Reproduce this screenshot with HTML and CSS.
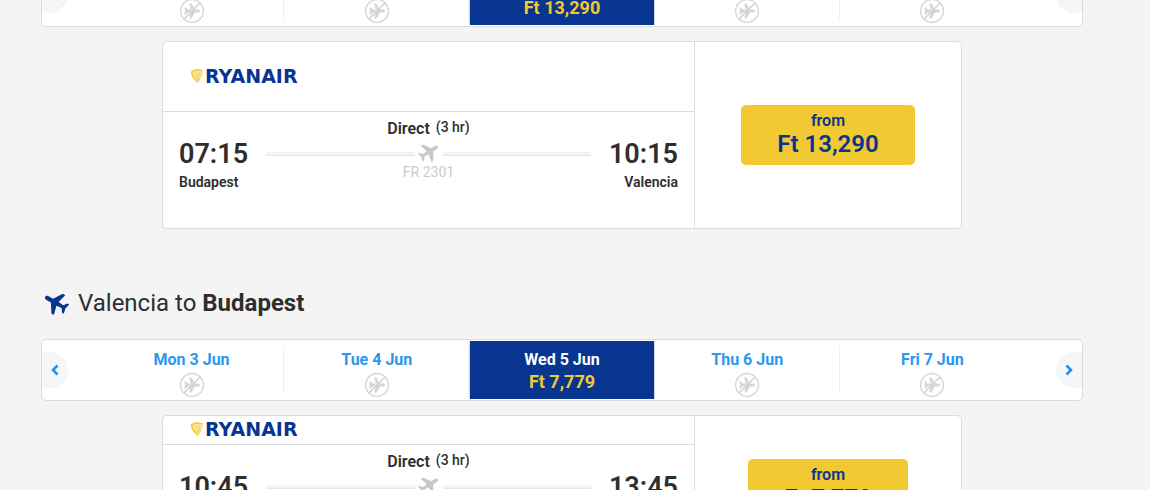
FILE: index.html
```html
<!DOCTYPE html>
<html lang="en">
<head>
  <meta charset="UTF-8" />
  <meta name="viewport" content="width=device-width, initial-scale=1.0"/>
  <title>Select flights</title>
  <link rel="stylesheet" href="styles.css">
</head>
<body>
  <!-- Shared icons -->
  <svg class="sprite" aria-hidden="true">
    <symbol id="plane" viewBox="0 0 24 24">
      <path d="M22.500 15.800v-2.600l-8.500-5.500V3c0-1.300-.8-2.600-2-2.600S10 1.700 10 3v4.700L1.500 13.200v2.600l8.500-2.200.5 5.200-3.500 2.600v1.800l5-1.200 5 1.200v-1.800l-3.500-2.600.5-5.200z"/>
    </symbol>
    <symbol id="no-flight" viewBox="0 0 26 26">
      <circle cx="13" cy="13" r="11.400" fill="none" stroke="#d3d8dc" stroke-width="1.500"/>
      <path fill="#d3d6d9" d="M21 13c0-1-.9-1.600-2-1.600h-3L12.400 5.500h-2.200l1.600 5.900-3.200.1-1.600-1.900H5.300l.8 3.400-.8 3.400H7l1.600-1.900 3.200.1-1.600 5.900h2.200l3.600-5.900h3c1.100 0 2-.6 2-1.600z"/>
      <path d="M4.400 20 20 4.400" stroke="#fff" stroke-width=".6"/>
      <path d="M5 21 21 5" stroke="#cbd0d5" stroke-width="1.400"/>
    </symbol>
    <symbol id="harp" viewBox="0 0 12 14">
      <path d="M.6 2.500C3 .3 8 .6 11.500 1.700 11.200 6 9.600 10 7.200 13.500 3.500 10.500.6 6.500.6 2.500z" fill="#fbe7a4"/>
      <path d="M7.200 13C3.500 10.500.6 6.500.8 2.800 3.500.5 8 .9 11.400 1.800" fill="none" stroke="#f1c933" stroke-width="1.600"/>
      <path d="M3.500 3.500 7 11M6 3l1.500 8M8.500 3l-.7 7M11 2C10.700 6 9.200 10 7.200 13" fill="none" stroke="#f3d257" stroke-width=".8"/>
    </symbol>
    <symbol id="left" viewBox="0 0 8 12"><path d="M6.500 1.500 2 6l4.500 4.500" fill="none" stroke="#2091eb" stroke-width="2.500"/></symbol>
    <symbol id="right" viewBox="0 0 8 12"><path d="M1.500 1.500 6 6l-4.500 4.500" fill="none" stroke="#2091eb" stroke-width="2.500"/></symbol>
  </svg>

  <main class="page">
    <!-- Outbound -->
    <div class="dates dates-cut">
      <button class="arrow prev" aria-label="Previous days"><svg><use href="#left"/></svg></button>
      <div class="days">
        <button class="day" aria-label="No flight"><svg class="none"><use href="#no-flight"/></svg></button>
        <button class="day" aria-label="No flight"><svg class="none"><use href="#no-flight"/></svg></button>
        <button class="day selected"><span class="fare">Ft 13,290</span></button>
        <button class="day" aria-label="No flight"><svg class="none"><use href="#no-flight"/></svg></button>
        <button class="day" aria-label="No flight"><svg class="none"><use href="#no-flight"/></svg></button>
      </div>
      <button class="arrow next" aria-label="Next days"><svg><use href="#right"/></svg></button>
    </div>

    <div class="card">
      <div class="flight">
        <div class="airline airline-tall">
          <svg class="harp"><use href="#harp"/></svg><span>RYANAIR</span>
        </div>
        <div class="leg">
          <div class="stop">
            <div class="time">07:15</div>
            <div class="city">Budapest</div>
          </div>
          <div class="route">
            <div class="direct">Direct <span class="duration">(3 hr)</span></div>
            <div class="line"><svg><use href="#plane"/></svg></div>
            <div class="number">FR 2301</div>
          </div>
          <div class="stop arrival">
            <div class="time">10:15</div>
            <div class="city">Valencia</div>
          </div>
        </div>
      </div>
      <div class="buy">
        <button class="price"><span class="from">from</span><span class="amount">Ft 13,290</span></button>
      </div>
    </div>

    <!-- Return -->
    <h2 class="title"><svg><use href="#plane"/></svg><span>Valencia to <b>Budapest</b></span></h2>

    <div class="dates">
      <button class="arrow prev" aria-label="Previous days"><svg><use href="#left"/></svg></button>
      <div class="days">
        <button class="day"><span class="date">Mon 3 Jun</span><svg class="none"><use href="#no-flight"/></svg></button>
        <button class="day"><span class="date">Tue 4 Jun</span><svg class="none"><use href="#no-flight"/></svg></button>
        <button class="day selected"><span class="date">Wed 5 Jun</span><span class="fare">Ft 7,779</span></button>
        <button class="day"><span class="date">Thu 6 Jun</span><svg class="none"><use href="#no-flight"/></svg></button>
        <button class="day"><span class="date">Fri 7 Jun</span><svg class="none"><use href="#no-flight"/></svg></button>
      </div>
      <button class="arrow next" aria-label="Next days"><svg><use href="#right"/></svg></button>
    </div>

    <div class="card">
      <div class="flight">
        <div class="airline">
          <svg class="harp"><use href="#harp"/></svg><span>RYANAIR</span>
        </div>
        <div class="leg">
          <div class="stop">
            <div class="time">10:45</div>
          </div>
          <div class="route">
            <div class="direct">Direct <span class="duration">(3 hr)</span></div>
            <div class="line"><svg><use href="#plane"/></svg></div>
          </div>
          <div class="stop arrival">
            <div class="time">13:45</div>
          </div>
        </div>
      </div>
      <div class="buy">
        <button class="price"><span class="from">from</span><span class="amount">Ft 7,779</span></button>
      </div>
    </div>
  </main>
</body>
</html>
```
FILE: styles.css
```css
* {
  box-sizing: border-box;
}

body {
  margin: 0;
  height: 100vh;
  overflow: hidden;
  background-color: #f4f4f4;
  color: #2e2e2e;
  font-family: Roboto, sans-serif;
}

button {
  border: none;
  padding: 0;
  font-family: inherit;
  cursor: pointer;
}

svg {
  display: block;
  flex-shrink: 0;
}

.sprite {
  position: absolute;
  width: 0;
  height: 0;
}

.page {
  padding: 0 67px 0 41px;
}

/* Date strip */
.dates {
  display: flex;
  align-items: center;
  height: 62px;
  background-color: white;
  border: 1px solid #d8dde1;
  border-radius: 5px;
  overflow: hidden;
}

.days {
  flex: 1;
  align-self: stretch;
  display: grid;
  grid-template-columns: repeat(5, 1fr);
  grid-template-rows: 100%;
  margin: 1px 31px 1px 31px;
}

.day {
  display: flex;
  flex-direction: column;
  align-items: center;
  justify-content: flex-end;
  min-height: 0;
  background: linear-gradient(#eff0f1, #eff0f1) right center / 1px 48px no-repeat;
}

.day:last-child {
  background: none;
}

.day.selected {
  background: #073590;
  border: solid #d3dbea;
  border-width: 0 1px;
  padding-bottom: 6px;
}

.date {
  font-size: 16px;
  font-weight: 700;
  line-height: 22px;
  color: #2b97ef;
}

.selected .date {
  color: white;
}

.fare {
  font-size: 18px;
  font-weight: 700;
  line-height: 22px;
  color: #f1c933;
}

.none {
  width: 26px;
  height: 26px;
  margin: 1px 0;
}

.arrow {
  display: flex;
  align-items: center;
  justify-content: center;
  width: 26px;
  height: 36px;
  background-color: #f4f6f8;
}

.arrow svg {
  width: 8px;
  height: 12px;
}

.prev {
  border-radius: 0 18px 18px 0;
}

.next {
  border-radius: 18px 0 0 18px;
}

.dates-cut {
  align-items: flex-end;
  height: 27px;
  border-top: none;
  border-radius: 0 0 5px 5px;
}

.dates-cut .days {
  margin-top: 0;
}

.dates-cut .day {
  background-position: right bottom 5px;
}

.dates-cut .arrow {
  margin-bottom: 13px;
}

/* Flight card */
.card {
  display: grid;
  grid-template-columns: 2fr 1fr;
  width: 77%;
  max-width: 800px;
  margin: 14px auto 0;
  background-color: white;
  border: 1px solid #d8dde1;
  border-radius: 5px;
}

.flight {
  border-right: 1px solid #d8dde1;
}

.airline {
  display: flex;
  align-items: center;
  height: 29px;
  padding: 0 28px 2px;
  border-bottom: 1px solid #d8dde1;
  font-family: "DejaVu Sans", sans-serif;
  font-size: 19px;
  font-weight: 700;
  color: #073590;
}

.airline-tall {
  height: 70px;
}

.harp {
  width: 12px;
  height: 14px;
  margin-right: 2px;
}

.leg {
  display: flex;
  gap: 18px;
  height: 116px;
  padding: 6px 16px;
}

.stop {
  padding-top: 20px;
}

.arrival {
  text-align: right;
}

.time {
  font-size: 27px;
  font-weight: 600;
  line-height: 32px;
}

.city {
  margin-top: 2px;
  font-size: 14px;
  font-weight: 600;
  line-height: 20px;
}

.route {
  flex: 1;
  text-align: center;
}

.direct {
  display: flex;
  justify-content: center;
  gap: 6px;
  height: 26px;
  font-size: 16px;
  font-weight: 600;
  line-height: 22px;
}

.duration {
  font-size: 14px;
  font-weight: 500;
  line-height: 18px;
}

.line {
  display: flex;
  align-items: center;
  gap: 3px;
  height: 20px;
}

.line::before,
.line::after {
  content: "";
  flex: 1;
  height: 3px;
  background-color: #f4f4f4;
  border-bottom: 1px solid #e4e7e9;
}

.line svg {
  width: 22px;
  height: 22px;
  margin-bottom: 4px;
  fill: #c6c8ca;
  transform: rotate(57deg);
}

.number {
  font-size: 14px;
  line-height: 16px;
  color: #c6cbcf;
}

.buy {
  display: flex;
  align-items: center;
  justify-content: center;
}

.price {
  display: flex;
  flex-direction: column;
  align-items: center;
  height: 60px;
  padding: 6px 36px;
  background-color: #f1c933;
  border-radius: 5px;
  color: #073590;
  font-weight: 600;
}

.from {
  font-size: 16px;
  line-height: 20px;
}

.amount {
  font-size: 24px;
  line-height: 26px;
}

/* Return heading */
.title {
  display: flex;
  align-items: center;
  gap: 9px;
  margin: 59px 0 21px;
  padding-left: 2px;
  font-size: 24px;
  font-weight: 400;
  line-height: 30px;
}

.title b {
  font-weight: 700;
}

.title svg {
  width: 26px;
  height: 26px;
  fill: #073590;
  transform: rotate(-60deg);
}
```
